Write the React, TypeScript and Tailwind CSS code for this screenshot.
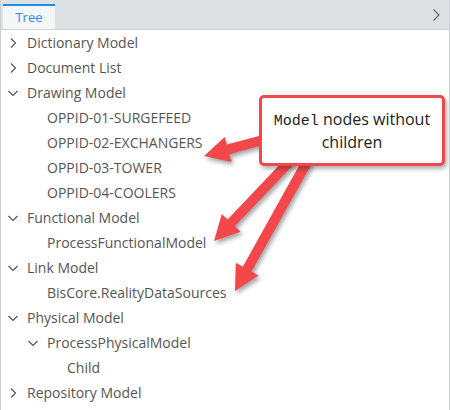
import React from "react";

type Node = { label: string; level: number; chevron?: "right" | "down" };

const rows: Node[] = [
  { label: "Dictionary Model", level: 0, chevron: "right" },
  { label: "Document List", level: 0, chevron: "right" },
  { label: "Drawing Model", level: 0, chevron: "down" },
  { label: "OPPID-01-SURGEFEED", level: 1 },
  { label: "OPPID-02-EXCHANGERS", level: 1 },
  { label: "OPPID-03-TOWER", level: 1 },
  { label: "OPPID-04-COOLERS", level: 1 },
  { label: "Functional Model", level: 0, chevron: "down" },
  { label: "ProcessFunctionalModel", level: 1 },
  { label: "Link Model", level: 0, chevron: "down" },
  { label: "BisCore.RealityDataSources", level: 1 },
  { label: "Physical Model", level: 0, chevron: "down" },
  { label: "ProcessPhysicalModel", level: 1, chevron: "down" },
  { label: "Child", level: 2 },
  { label: "Repository Model", level: 0, chevron: "right" },
];

function Chevron({ dir }: { dir: "right" | "down" }) {
  return (
    <svg width="12" height="12" viewBox="0 0 12 12" className="shrink-0">
      {dir === "right" ? (
        <path d="M4 1.5 L8.5 6 L4 10.5" fill="none" stroke="#555" strokeWidth="1.2" />
      ) : (
        <path d="M1.5 4 L6 8.5 L10.5 4" fill="none" stroke="#555" strokeWidth="1.2" />
      )}
    </svg>
  );
}

function arrowPoints(sx: number, sy: number, tx: number, ty: number) {
  const dx = tx - sx;
  const dy = ty - sy;
  const len = Math.hypot(dx, dy);
  const ux = dx / len;
  const uy = dy / len;
  const px = -uy;
  const py = ux;
  const shaft = 5;
  const head = 13;
  const headLen = 25;
  const bx = tx - ux * headLen;
  const by = ty - uy * headLen;
  const pts = [
    [sx + px * shaft, sy + py * shaft],
    [bx + px * shaft, by + py * shaft],
    [bx + px * head, by + py * head],
    [tx, ty],
    [bx - px * head, by - py * head],
    [bx - px * shaft, by - py * shaft],
    [sx - px * shaft, sy - py * shaft],
  ];
  return pts.map((p) => `${p[0].toFixed(1)},${p[1].toFixed(1)}`).join(" ");
}

export default function App() {
  return (
    <div
      className="relative w-[450px] h-[410px] bg-white overflow-hidden border-l border-r border-[#c9cdd1]"
      style={{ fontFamily: '"Open Sans", "Liberation Sans", sans-serif' }}
    >
      <div className="h-[30px] bg-[#dee1e4] border-b border-[#cfd3d7] flex items-end justify-between">
        <div className="ml-[2px] w-[52px] h-[25px] bg-[#f5f6f8] border-t-2 border-[#1c8ae6] flex items-center justify-center text-[13px] text-[#2f8ee6]">
          Tree
        </div>
        <div className="h-full flex items-center pr-[8px]">
          <svg width="10" height="14" viewBox="0 0 10 14">
            <path d="M2.5 1.5 L8 7 L2.5 12.5" fill="none" stroke="#6b6f73" strokeWidth="1.3" />
          </svg>
        </div>
      </div>
      <div className="flex flex-col">
        {rows.map((r, i) => (
          <div
            key={i}
            className="h-[25px] flex items-center text-[14px] text-[#555555] whitespace-nowrap"
            style={{ paddingLeft: 6 + r.level * 20 }}
          >
            <div className="w-[20px] flex items-center">
              {r.chevron ? <Chevron dir={r.chevron} /> : null}
            </div>
            <span>{r.label}</span>
          </div>
        ))}
      </div>

      <svg
        className="absolute left-0 top-0 pointer-events-none"
        width="450"
        height="410"
        style={{ filter: "drop-shadow(2px 3px 2px rgba(0,0,0,0.35))" }}
      >
        <polygon points={arrowPoints(262, 140, 203, 156)} fill="#f2474b" />
        <polygon points={arrowPoints(290, 160, 213, 241)} fill="#f2474b" />
        <polygon points={arrowPoints(307, 160, 234, 291)} fill="#f2474b" />
      </svg>

      <div className="absolute left-[258px] top-[95px] w-[186px] h-[71px] bg-white border-[3px] border-[#f2474b] rounded-[5px] shadow-[2px_3px_4px_rgba(0,0,0,0.3)] flex flex-col items-center justify-center text-[16px] leading-[21px] text-[#222]">
        <div className="whitespace-nowrap">
          <span className="text-[15px]" style={{ fontFamily: '"Liberation Mono", monospace' }}>Model</span>
          <span> nodes without</span>
        </div>
        <div>children</div>
      </div>
    </div>
  );
}
